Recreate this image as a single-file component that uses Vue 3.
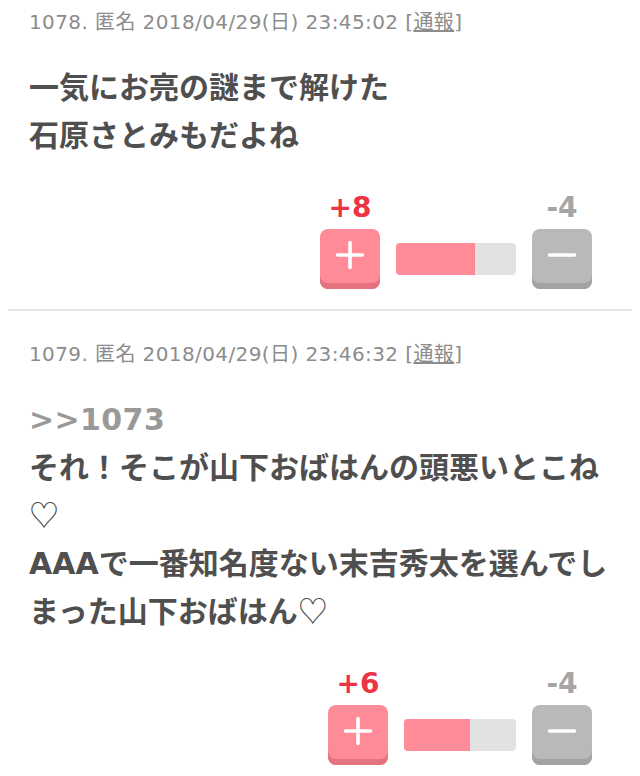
<script setup>
const comments = [
  { id: 1, no: 1078, date: '2018/04/29(日) 23:45:02', lines: [['一気にお亮の謎まで解けた'], ['石原さとみもだよね']], plus: 8, minus: 4, bar: 120, fill: 79 },
  { id: 2, no: 1079, date: '2018/04/29(日) 23:46:32', anchor: '>>1073', lines: [['それ！そこが山下おばはんの頭悪いとこね'], ['', '♡'], ['AAAで一番知名度ない末吉秀太を選んでし'], ['まった山下おばはん', '♡']], plus: 6, minus: 4, bar: 112, fill: 66 }
]
</script>

<template>
  <div class="list">
    <section v-for="c in comments" :key="c.id" class="item">
      <header class="meta">{{ c.no }}. 匿名 {{ c.date }} [<span class="report">通報</span>]</header>
      <div class="body">
        <div v-if="c.anchor" class="anchor">{{ c.anchor }}</div>
        <div v-for="(line, i) in c.lines" :key="i" class="line">{{ line[0] }}<span v-if="line[1]" class="heart">{{ line[1] }}</span></div>
      </div>
      <div class="votes">
        <div class="vote">
          <div class="count plus">+{{ c.plus }}</div>
          <div class="btn btn-plus">
            <svg width="32" height="32" viewBox="0 0 32 32"><path d="M16 3.5v25M3.5 16h25" stroke="#fff" stroke-width="3.6" stroke-linecap="round" fill="none" /></svg>
          </div>
        </div>
        <div class="bar" :style="{ width: c.bar + 'px' }">
          <div class="fill" :style="{ width: c.fill + 'px' }"></div>
        </div>
        <div class="vote">
          <div class="count minus">-{{ c.minus }}</div>
          <div class="btn btn-minus">
            <svg width="32" height="32" viewBox="0 0 32 32"><path d="M3.5 16h25" stroke="#fff" stroke-width="3.6" stroke-linecap="round" fill="none" /></svg>
          </div>
        </div>
      </div>
    </section>
  </div>
</template>

<style scoped>
.list {
  width: 640px;
  margin-top: -21px;
  padding: 0 8px;
  box-sizing: border-box;
  font-family: "DejaVu Sans", "Noto Sans CJK JP", sans-serif;
  background: #fff;
}
.item {
  padding: 30px 21px 20px;
  border-bottom: 2px solid #e4e4e4;
}
.item:last-child {
  border-bottom: 0;
}
.meta {
  font-size: 20px;
  letter-spacing: 0.4px;
  line-height: 26px;
  color: #8c8c8c;
  white-space: nowrap;
}
.report {
  text-decoration: underline;
}
.body {
  margin-top: 29px;
  font-size: 30px;
  line-height: 48px;
  font-weight: 700;
  color: #4f4f4f;
  white-space: nowrap;
}
.anchor {
  color: #999;
  letter-spacing: 0.4px;
}
.line {
  height: 48px;
}
.heart {
  font-family: "Noto Sans CJK JP", sans-serif;
  font-weight: 400;
  line-height: 0;
}
.votes {
  display: flex;
  justify-content: flex-end;
  align-items: flex-end;
  gap: 16px;
  margin-top: 30px;
  padding-right: 19px;
}
.vote {
  width: 60px;
}
.count {
  font-size: 28px;
  line-height: 36px;
  margin-bottom: 3px;
  font-weight: 700;
  text-align: center;
}
.plus {
  color: #ee3344;
}
.minus {
  color: #a5a5a5;
}
.btn {
  width: 60px;
  height: 60px;
  box-sizing: border-box;
  border-radius: 8px;
  display: flex;
  align-items: center;
  justify-content: center;
  padding-bottom: 8px;
}
.btn-plus {
  background: #ff8b98;
  box-shadow: inset 0 -6px 0 #e5737f;
}
.btn-minus {
  background: #b9b9b9;
  box-shadow: inset 0 -6px 0 #a3a3a3;
}
.bar {
  height: 32px;
  margin-bottom: 14px;
  border-radius: 4px;
  background: #e2e2e2;
  overflow: hidden;
}
.fill {
  height: 100%;
  background: #ff8b98;
}
</style>
